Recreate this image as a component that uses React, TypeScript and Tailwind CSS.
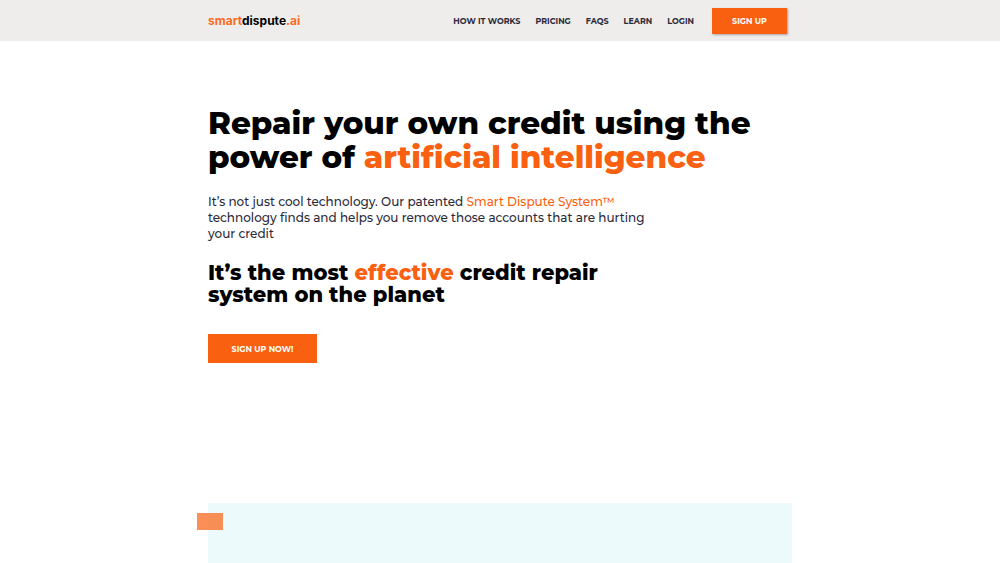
const navLinks = [
  { label: 'HOW IT WORKS', href: '#how-it-works' },
  { label: 'PRICING', href: '#pricing' },
  { label: 'FAQS', href: '#faqs' },
  { label: 'LEARN', href: '#learn' },
  { label: 'LOGIN', href: '#login' },
];

function Header() {
  return (
    <header className="bg-[#efedeb]">
      <div className="mx-auto flex h-[41px] w-full max-w-[584px] items-center justify-between pr-[5px]">
        <a href="#home" className="font-['Inter',sans-serif] text-xs font-bold text-black">
          <span className="text-[#fc6b1f]">smart</span>dispute<span className="text-[#fc6b1f]">.ai</span>
        </a>

        <div className="flex items-center gap-[18px]">
          <nav className="flex items-center gap-[15px]">
            {navLinks.map((link) => (
              <a key={link.label} href={link.href} className="text-[8px] font-bold whitespace-nowrap text-[#2b2a3a]">
                {link.label}
              </a>
            ))}
          </nav>
          <button
            type="button"
            className="h-[26px] w-[75px] bg-[#f96010] text-[8px] font-bold text-white shadow-[1px_1px_2px_rgba(0,0,0,0.3)]"
          >
            SIGN UP
          </button>
        </div>
      </div>
    </header>
  );
}

function Hero() {
  return (
    <section className="mx-auto w-full max-w-[584px] pt-[65px] pb-[140px]">
      <h1 className="text-[31px] leading-[34px] font-extrabold text-black">
        Repair your own credit using the power of{' '}
        <span className="text-[#f96010]">artificial intelligence</span>
      </h1>

      <p className="mt-5 max-w-[440px] text-xs leading-4 font-medium text-[#2b2a3a]">
        It’s not just cool technology. Our patented{' '}
        <span className="text-[#f96010]">Smart Dispute System™</span> technology finds and helps you
        remove those accounts that are hurting your credit
      </p>

      <h2 className="mt-5 max-w-[440px] text-[21px] leading-[22px] font-extrabold text-black">
        It’s the most <span className="text-[#f96010]">effective</span> credit repair system on the planet
      </h2>

      <button type="button" className="mt-7 block h-[29px] w-[109px] bg-[#f96010] text-[8px] font-bold text-white">
        SIGN UP NOW!
      </button>
    </section>
  );
}

export default function App() {
  return (
    <div className="flex min-h-screen flex-col bg-white font-['Montserrat','Inter',sans-serif]">
      <Header />
      <main className="flex flex-1 flex-col">
        <Hero />
        <section className="relative mx-auto w-full max-w-[584px] flex-1 bg-[#edfafb]">
          {/* Accent block hanging over the panel's edge */}
          <div className="absolute top-[10px] -left-[11px] h-[17px] w-[26px] bg-[#f96010]/70" />
        </section>
      </main>
    </div>
  );
}
